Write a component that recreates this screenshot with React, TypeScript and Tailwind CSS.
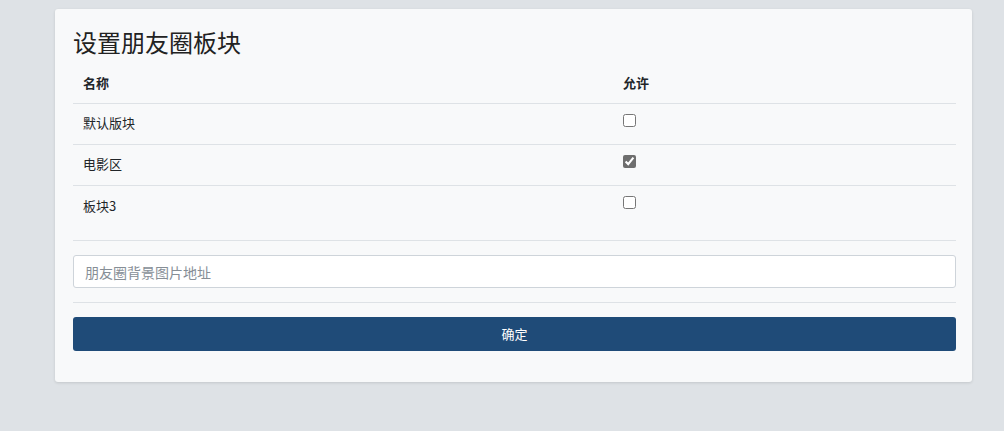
import React, { useState } from 'react';

const sections = [
  { id: 1, name: '默认版块', allowed: false },
  { id: 2, name: '电影区', allowed: true },
  { id: 3, name: '板块3', allowed: false },
];

export default function App() {
  const [rows, setRows] = useState(sections);
  const [bgUrl, setBgUrl] = useState('');

  const toggle = (id: number) =>
    setRows(rows.map(r => (r.id === id ? { ...r, allowed: !r.allowed } : r)));

  return (
    <div
      className="min-h-[431px] bg-[#dee2e6] pt-[9px] pb-[50px] pl-[55px] pr-[32px] text-[#212529]"
      style={{ fontFamily: '"Microsoft YaHei", "Noto Sans CJK SC", "Liberation Sans", sans-serif' }}
    >
      <div className="w-[917px] bg-[#f8f9fa] rounded-[3px] shadow-[0_1px_3px_rgba(0,0,0,0.12)] pl-[18px] pr-[16px] pt-[18px] pb-[31px]">
        <h2 className="text-[24px] leading-[29px] font-normal text-[#222] mb-[6px]">设置朋友圈板块</h2>

        {/* 版块列表 */}
        <table className="w-full text-[13px] border-collapse">
          <thead>
            <tr className="border-b border-[#dee2e6] h-[41px]">
              <th className="text-left font-bold px-[10px] w-[540px]">名称</th>
              <th className="text-left font-bold px-[10px]">允许</th>
            </tr>
          </thead>
          <tbody>
            {rows.map((r, i) => (
              <tr key={r.id} className={`h-[41px] ${i < rows.length - 1 ? 'border-b border-[#dee2e6]' : ''}`}>
                <td className="px-[10px] pb-[1px]">{r.name}</td>
                <td className="px-[10px]">
                  <input
                    type="checkbox"
                    checked={r.allowed}
                    onChange={() => toggle(r.id)}
                    className="block w-[13px] h-[13px] m-0 mb-[7px] accent-[#6e6e6e]"
                  />
                </td>
              </tr>
            ))}
          </tbody>
        </table>

        <hr className="border-0 border-t border-[#dee2e6] mt-[14px] mb-[14px]" />

        <input
          type="text"
          value={bgUrl}
          onChange={e => setBgUrl(e.target.value)}
          placeholder="朋友圈背景图片地址"
          className="w-full h-[33px] bg-white border border-[#ced4da] rounded-[3px] px-[11px] text-[14px] placeholder:text-[#868e96] outline-none"
        />

        <hr className="border-0 border-t border-[#dee2e6] mt-[14px] mb-[14px]" />

        <button className="w-full h-[34px] bg-[#1f4b78] text-white text-[13px] rounded-[3px]">
          确定
        </button>
      </div>
    </div>
  );
}
